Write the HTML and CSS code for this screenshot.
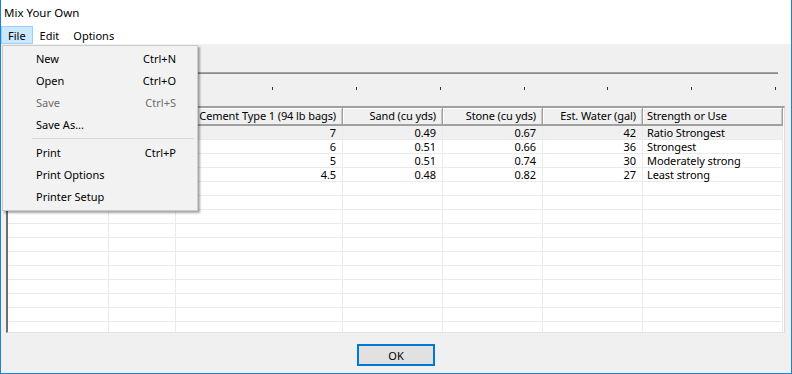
FILE: index.html
```html
<!DOCTYPE html>
<html>
<head>
<meta charset="utf-8">
<link rel="stylesheet" href="styles.css">
</head>
<body>
<div class="window">
  <div class="titlebar">Mix Your Own</div>
  <div class="menubar">
    <span class="mitem active">File</span>
    <span class="mitem">Edit</span>
    <span class="mitem">Options</span>
  </div>
  <div class="client">
    <div class="rule"></div>
    <div class="ticks">
      <i></i><i></i><i></i><i></i><i></i><i></i><i></i><i></i><i></i><i></i>
    </div>
    <div class="grid">
      <div class="row head">
        <div class="c"></div><div class="c"></div>
        <div class="c r">Cement Type 1 (94 lb bags)</div>
        <div class="c r">Sand (cu yds)</div>
        <div class="c r">Stone (cu yds)</div>
        <div class="c r">Est. Water (gal)</div>
        <div class="c">Strength or Use</div>
      </div>
      <div class="row sel">
        <div class="c"></div><div class="c"></div>
        <div class="c r">7</div><div class="c r">0.49</div><div class="c r">0.67</div><div class="c r">42</div><div class="c">Ratio Strongest</div>
      </div>
      <div class="row">
        <div class="c"></div><div class="c"></div>
        <div class="c r">6</div><div class="c r">0.51</div><div class="c r">0.66</div><div class="c r">36</div><div class="c">Strongest</div>
      </div>
      <div class="row">
        <div class="c"></div><div class="c"></div>
        <div class="c r">5</div><div class="c r">0.51</div><div class="c r">0.74</div><div class="c r">30</div><div class="c">Moderately strong</div>
      </div>
      <div class="row">
        <div class="c"></div><div class="c"></div>
        <div class="c r">4.5</div><div class="c r">0.48</div><div class="c r">0.82</div><div class="c r">27</div><div class="c">Least strong</div>
      </div>
      <div class="row"><div class="c"></div><div class="c"></div><div class="c"></div><div class="c"></div><div class="c"></div><div class="c"></div><div class="c"></div></div>
      <div class="row"><div class="c"></div><div class="c"></div><div class="c"></div><div class="c"></div><div class="c"></div><div class="c"></div><div class="c"></div></div>
      <div class="row"><div class="c"></div><div class="c"></div><div class="c"></div><div class="c"></div><div class="c"></div><div class="c"></div><div class="c"></div></div>
      <div class="row"><div class="c"></div><div class="c"></div><div class="c"></div><div class="c"></div><div class="c"></div><div class="c"></div><div class="c"></div></div>
      <div class="row"><div class="c"></div><div class="c"></div><div class="c"></div><div class="c"></div><div class="c"></div><div class="c"></div><div class="c"></div></div>
      <div class="row"><div class="c"></div><div class="c"></div><div class="c"></div><div class="c"></div><div class="c"></div><div class="c"></div><div class="c"></div></div>
      <div class="row"><div class="c"></div><div class="c"></div><div class="c"></div><div class="c"></div><div class="c"></div><div class="c"></div><div class="c"></div></div>
      <div class="row"><div class="c"></div><div class="c"></div><div class="c"></div><div class="c"></div><div class="c"></div><div class="c"></div><div class="c"></div></div>
      <div class="row"><div class="c"></div><div class="c"></div><div class="c"></div><div class="c"></div><div class="c"></div><div class="c"></div><div class="c"></div></div>
      <div class="row"><div class="c"></div><div class="c"></div><div class="c"></div><div class="c"></div><div class="c"></div><div class="c"></div><div class="c"></div></div>
      <div class="row"><div class="c"></div><div class="c"></div><div class="c"></div><div class="c"></div><div class="c"></div><div class="c"></div><div class="c"></div></div>
    </div>
    <div class="footer">
      <button class="ok">OK</button>
    </div>
  </div>
</div>
<div class="dropdown">
  <div class="ditem"><span>New</span><span>Ctrl+N</span></div>
  <div class="ditem"><span>Open</span><span>Ctrl+O</span></div>
  <div class="ditem disabled"><span>Save</span><span>Ctrl+S</span></div>
  <div class="ditem"><span>Save As...</span><span></span></div>
  <div class="sep"></div>
  <div class="ditem"><span>Print</span><span>Ctrl+P</span></div>
  <div class="ditem"><span>Print Options</span><span></span></div>
  <div class="ditem"><span>Printer Setup</span><span></span></div>
</div>
</body>
</html>
```
FILE: styles.css
```css
* { box-sizing: border-box; }
html, body { margin: 0; padding: 0; }
body {
  width: 792px;
  height: 374px;
  overflow: hidden;
  font-family: "Noto Sans", "Open Sans", sans-serif;
  font-size: 11px;
  color: #000;
  background: #fff;
  position: relative;
}
.window {
  width: 792px;
  height: 374px;
  border-left: 1px solid #1883d7;
  border-right: 1px solid #1883d7;
  border-bottom: 1px solid #1883d7;
  display: flex;
  flex-direction: column;
}
.titlebar {
  height: 23px;
  padding: 1px 0 0 3px;
  display: flex;
  align-items: center;
  font-size: 11.5px;
  background: #fff;
}
.menubar {
  height: 21px;
  padding-top: 3px;
  display: flex;
  background: #fff;
}
.mitem {
  height: 18px;
  border: 1px solid transparent;
  padding: 0 6px;
  display: flex;
  align-items: center;
}
.mitem.active {
  background: #cce8ff;
  border-color: #99d1ff;
}
.client {
  flex: 1;
  background: #f0f0f0;
  padding: 28px 5px 0 5px;
  display: flex;
  flex-direction: column;
}
.rule {
  margin-left: 1px;
  width: 771px;
  height: 2px;
  border-top: 1px solid #a0a0a0;
  border-bottom: 1px solid #8a8a8a;
}
.ticks {
  margin: 13px 0 0 15px;
  width: 755px;
  height: 3px;
  display: flex;
  justify-content: space-between;
}
.ticks i {
  width: 1px;
  height: 3px;
  background: #333;
}
.grid {
  margin-top: 16px;
  width: 779px;
  height: 227px;
  overflow: hidden;
  background: #fff;
  border-top: 2px solid #a0a0a0;
  border-left: 2px solid #6e6e6e;
  border-right: 1px solid #dcdcdc;
  border-bottom: 1px solid #e3e3e3;
  padding-right: 1px;
}
.row {
  display: grid;
  grid-template-columns: 101px 67px 167px 100px 100px 100px 140px;
  height: 14px;
}
.row .c {
  height: 14px;
  border-right: 1px solid #ebebeb;
  border-bottom: 1px solid #ebebeb;
  padding: 0 4px;
  line-height: 13px;
  white-space: nowrap;
  letter-spacing: -0.1px;
}
.row .c.r { text-align: right; padding-right: 6px; }
.row.head {
  height: 18px;
  background: #f0f0f0;
}
.row.head .c {
  height: 18px;
  line-height: 15px;
  overflow: hidden;
  border-right: 1px solid #a0a0a0;
  border-bottom: 2px solid #a0a0a0;
  box-shadow: inset 1px 1px 0 #fff, inset -1px 0 0 #c8c8c8;
}
.row.sel { background: #f0f0f0; }
.footer {
  display: flex;
  justify-content: center;
  padding-top: 11px;
}
.ok {
  width: 78px;
  height: 22px;
  border: 2px solid #0078d7;
  background: #e1e1e1;
  font-family: "Noto Sans", "Open Sans", sans-serif;
  font-size: 11px;
  color: #000;
  padding: 0;
  margin: 0;
}
.dropdown {
  position: absolute;
  left: 2px;
  top: 45px;
  width: 196px;
  background: #f2f2f2;
  border: 1px solid #cccccc;
  padding: 1px 0 3px 0;
  box-shadow: 2px 2px 2px rgba(0, 0, 0, 0.35);
}
.ditem {
  height: 22px;
  display: flex;
  align-items: center;
  justify-content: space-between;
  padding: 0 21px 0 33px;
}
.ditem.disabled { color: #6d6d6d; }
.sep {
  height: 6px;
  padding: 3px 3px 2px 29px;
}
.sep::after {
  content: "";
  display: block;
  height: 1px;
  background: #d7d7d7;
}
```
